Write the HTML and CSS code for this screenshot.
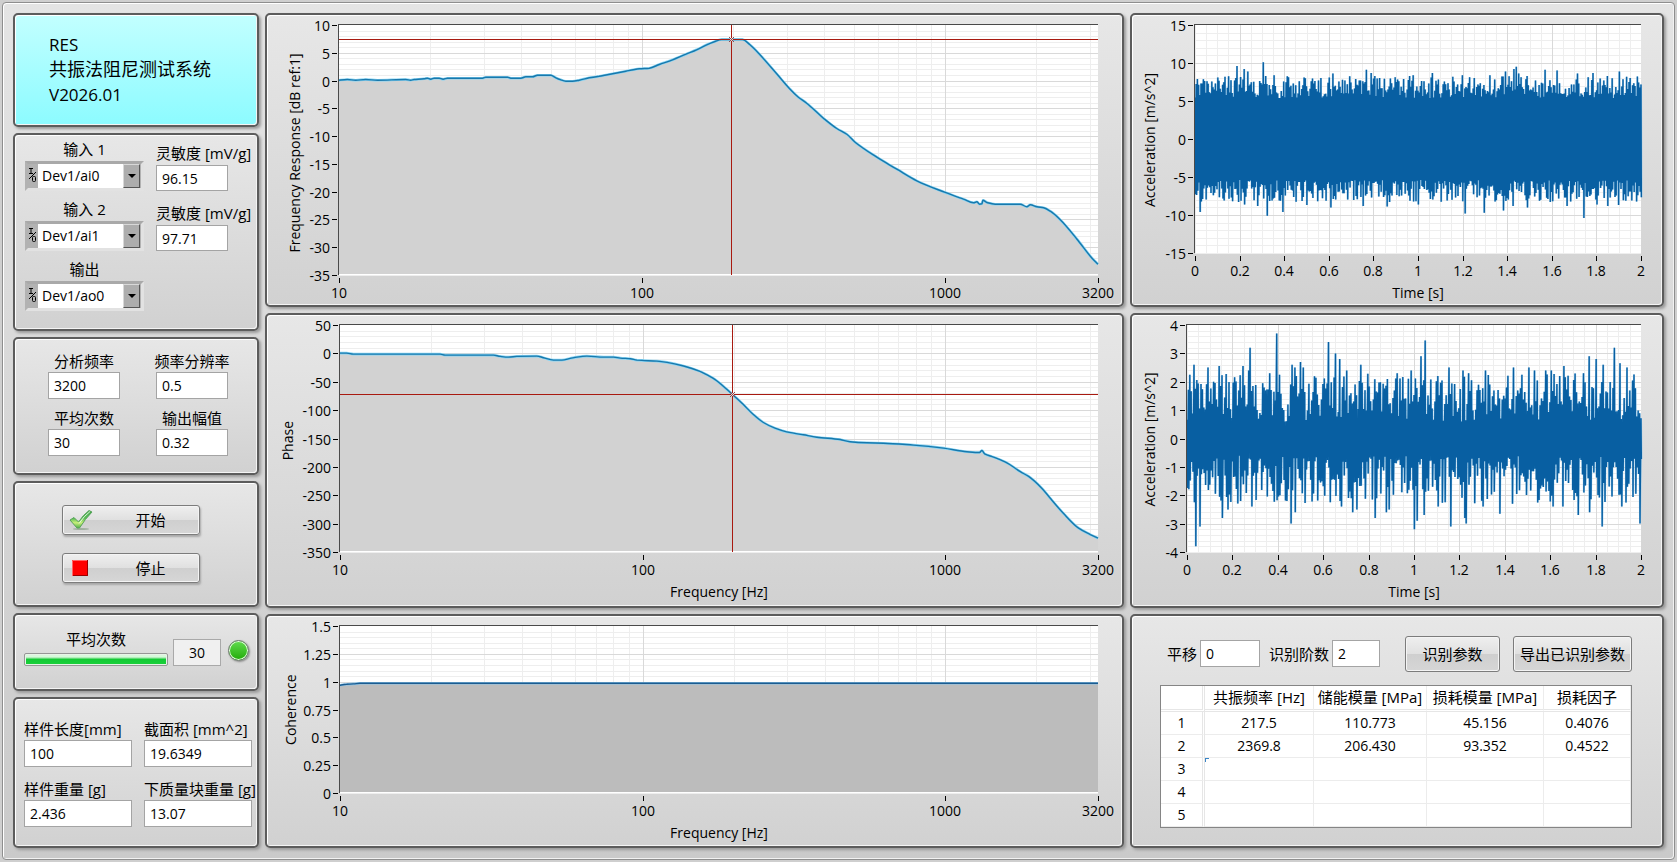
FILE: index.html
```html
<!DOCTYPE html>
<html lang="zh-CN">
<head>
<meta charset="utf-8">
<title>RES 共振法阻尼测试系统</title>
<link rel="stylesheet" href="styles.css">
</head>
<body>
<main class="frame">
  <div class="column side">
    <header class="panel banner">
      <h1 class="banner-title">RES<br><span class="banner-name">共振法阻尼测试系统</span><br>V2026.01</h1>
    </header>

    <section class="panel channels">
      <div class="field">
        <label for="in1">输入 1</label>
        <div class="ring">
          <svg class="io" viewBox="0 0 9 16"><path d="M1 1.5h4M3 1.5v5M1 6.500h4M1 12L8 5M4.500 10.500q0-1 1-1h1q1 0 1 1v3q0 1-1 1h-1q-1 0-1-1z"/></svg>
          <select id="in1"><option>Dev1/ai0</option></select>
          <span class="arrow"></span>
        </div>
      </div>
      <div class="field left drop"><label for="s1">灵敏度 [mV/g]</label><input id="s1" type="text" value="96.15"></div>
      <div class="field">
        <label for="in2">输入 2</label>
        <div class="ring">
          <svg class="io" viewBox="0 0 9 16"><path d="M1 1.5h4M3 1.5v5M1 6.500h4M1 12L8 5M4.500 10.500q0-1 1-1h1q1 0 1 1v3q0 1-1 1h-1q-1 0-1-1z"/></svg>
          <select id="in2"><option>Dev1/ai1</option></select>
          <span class="arrow"></span>
        </div>
      </div>
      <div class="field left drop"><label for="s2">灵敏度 [mV/g]</label><input id="s2" type="text" value="97.71"></div>
      <div class="field">
        <label for="out">输出</label>
        <div class="ring">
          <svg class="io" viewBox="0 0 9 16"><path d="M1 1.5h4M3 1.5v5M1 6.500h4M1 12L8 5M4.500 10.500q0-1 1-1h1q1 0 1 1v3q0 1-1 1h-1q-1 0-1-1z"/></svg>
          <select id="out"><option>Dev1/ao0</option></select>
          <span class="arrow"></span>
        </div>
      </div>
    </section>

    <section class="panel analysis">
      <div class="field"><label for="freq">分析频率</label><input id="freq" type="text" value="3200"></div>
      <div class="field"><label for="res">频率分辨率</label><input id="res" type="text" value="0.5"></div>
      <div class="field"><label for="avg">平均次数</label><input id="avg" type="text" value="30"></div>
      <div class="field"><label for="amp">输出幅值</label><input id="amp" type="text" value="0.32"></div>
    </section>

    <section class="panel actions">
      <button class="run" type="button">
        <svg class="run-icon" viewBox="0 0 24 22">
          <defs><linearGradient id="tick" x1="0" y1="0" x2="0" y2="1"><stop offset="0" stop-color="#3fa548"/><stop offset=".45" stop-color="#58bd55"/><stop offset=".7" stop-color="#c8ef7a"/><stop offset="1" stop-color="#4fb04a"/></linearGradient></defs>
          <ellipse cx="12" cy="20" rx="8" ry="1" fill="#8aa08a" opacity=".7"/>
          <path d="M1 11L5 8.500L9.500 13Q14 6 20 1.500L23 3Q16 10 10.500 19H8Z" fill="url(#tick)" stroke="#5aa35c"/>
          <path d="M10 14.500Q15 7 21 2.500" fill="none" stroke="#e3f8e0" stroke-width="1"/>
        </svg>
        <span class="run-text">开始</span>
      </button>
      <button class="run" type="button">
        <svg class="run-icon" viewBox="0 0 24 22"><rect x="3" y="3" width="16" height="16" fill="#f00"/><path d="M3.500 19V3.500H19" fill="none" stroke="#f66"/><path d="M4 18.500H18.500V3" fill="none" stroke="#900"/></svg>
        <span class="run-text">停止</span>
      </button>
    </section>

    <section class="panel progress">
      <div class="field meter"><label for="bar">平均次数</label><progress id="bar" max="30" value="30"></progress></div>
      <output class="count" for="bar">30</output>
      <span class="led"></span>
    </section>

    <section class="panel sample">
      <div class="field left"><label for="len">样件长度[mm]</label><input id="len" type="text" value="100"></div>
      <div class="field left"><label for="area">截面积 [mm^2]</label><input id="area" type="text" value="19.6349"></div>
      <div class="field left"><label for="mass">样件重量 [g]</label><input id="mass" type="text" value="2.436"></div>
      <div class="field left"><label for="block">下质量块重量 [g]</label><input id="block" type="text" value="13.07"></div>
    </section>
  </div>

  <div class="column charts">
    <section class="panel chart" data-chart="response"></section>
    <section class="panel chart" data-chart="phase"></section>
    <section class="panel chart" data-chart="coherence"></section>
  </div>

  <div class="column charts">
    <section class="panel chart" data-chart="wave1"></section>
    <section class="panel chart" data-chart="wave2"></section>
    <section class="panel results">
      <div class="toolbar">
        <label for="shift">平移</label><input class="shift" id="shift" type="text" value="0">
        <label class="order-label" for="order">识别阶数</label><input class="order" id="order" type="text" value="2">
        <button class="tool identify" type="button">识别参数</button>
        <button class="tool export" type="button">导出已识别参数</button>
      </div>
      <table class="modes">
        <colgroup><col class="c-index"><col class="c-freq"><col class="c-store"><col class="c-loss"><col class="c-factor"></colgroup>
        <thead><tr><th></th><th>共振频率 [Hz]</th><th>储能模量 [MPa]</th><th>损耗模量 [MPa]</th><th>损耗因子</th></tr></thead>
        <tbody>
          <tr><th>1</th><td>217.5</td><td>110.773</td><td>45.156</td><td>0.4076</td></tr>
          <tr><th>2</th><td>2369.8</td><td>206.430</td><td>93.352</td><td>0.4522</td></tr>
          <tr><th>3</th><td class="active"></td><td></td><td></td><td></td></tr>
          <tr><th>4</th><td></td><td></td><td></td><td></td></tr>
          <tr><th>5</th><td></td><td></td><td></td><td></td></tr>
        </tbody>
      </table>
    </section>
  </div>
</main>
<script src="charts.js"></script>
</body>
</html>
```

FILE: styles.css
```css
* { box-sizing: border-box; }

body {
  margin: 0;
  padding: 2px;
  height: 100vh;
  min-height: 840px;
  background: #cfcfcf;
  color: #000;
  font: 14px/20px "Open Sans", "Noto Sans CJK SC", sans-serif;
}

input, select, button { font: inherit; color: inherit; }

.frame {
  display: grid;
  grid-template-columns: 246px minmax(0, 859fr) minmax(500px, 534fr);
  gap: 6px;
  height: 100%;
  padding: 10px 10px 11px;
  border: 1px solid #8e8e8e;
  border-radius: 4px;
  box-shadow: inset 1px 1px #fff, inset -1px -1px #f2f2f2;
  background: linear-gradient(#e4e4e4, #cacaca);
}

.column { display: grid; gap: 6px; min-height: 0; }
.side { grid-template-rows: 114fr 198fr 138fr 126fr 78fr 151fr; }
.charts { grid-template-rows: 294fr 294fr 234fr; }

.panel {
  border: 2px solid #5c5c5c;
  border-radius: 5px;
  background: linear-gradient(#e7e7e7, #d1d1d1);
  box-shadow: inset 1px 1px #fff, inset -1px -1px #f4f4f4, 2px 2px 3px #9a9a9a;
  min-height: 0;
}

/* side column */

.banner { padding: 17px 0 0 34px; background: linear-gradient(#c2ffff, #8cfbff); }
.banner-title { margin: 0; font-size: 17px; font-weight: 400; line-height: 25px; }
.banner-name { font-size: 18px; }

.channels {
  display: grid;
  grid-template-columns: 119px 95px;
  grid-auto-rows: 52px;
  align-content: start;
  gap: 8px 12px;
  padding: 4px 0 0 10px;
}
.analysis {
  display: grid;
  grid-template-columns: 72px 72px;
  grid-auto-rows: 48px;
  align-content: start;
  gap: 9px 36px;
  padding: 12px 0 0 33px;
}
.sample {
  display: grid;
  grid-template-columns: 108px 108px;
  grid-auto-rows: 48px;
  align-content: start;
  gap: 12px;
  padding: 20px 0 0 9px;
}

.field { display: flex; flex-direction: column; align-items: center; gap: 1px; }
.channels .field { gap: 2px; }
.field.left { align-items: flex-start; }
.field.drop { padding-top: 4px; }
label { font-size: 15px; white-space: nowrap; }

input {
  width: 100%;
  height: 27px;
  padding: 0 5px;
  border: 1px solid #a4a4a4;
  border-radius: 0;
  background: #fff;
}
.drop input { width: 72px; }

.ring {
  position: relative;
  display: flex;
  align-items: stretch;
  width: 119px;
  height: 30px;
  padding-right: 1px;
  border: 3px solid;
  border-color: #a9a9a9 #e2e2e2 #e2e2e2 #b2b2b2;
  background: #b2b2b2;
}
.io { flex: none; width: 9px; height: 16px; margin: 3px 1px 0 0; fill: none; stroke: #000; }
.ring select {
  flex: 1;
  min-width: 0;
  padding: 0 20px 0 4px;
  border: 0;
  border-radius: 0;
  background: #fff;
  appearance: none;
}
.arrow {
  position: absolute;
  top: 0;
  right: 1px;
  bottom: 0;
  width: 17px;
  border: 1px solid;
  border-color: #d8d8d8 #555 #555 #d8d8d8;
  background: #adadad;
  pointer-events: none;
}
.arrow::after {
  content: "";
  position: absolute;
  top: 9px;
  left: 4px;
  border: 4px solid transparent;
  border-top-color: #000;
  border-bottom: 0;
}

.actions { display: flex; flex-direction: column; gap: 18px; padding: 22px 0 0 47px; }
.run, .tool {
  border: 1px solid #7c7c7c;
  border-radius: 3px;
  background: linear-gradient(#efefef, #e0e0e0 50%, #cfcfcf 51%, #d6d6d6);
  font-size: 15px;
}
.run {
  display: flex;
  align-items: center;
  width: 138px;
  height: 30px;
  padding: 0 2px 0 6px;
  box-shadow: inset 0 0 0 1px #f4f4f4, 1px 2px 2px #a8a8a8;
}
.run-icon { width: 24px; height: 22px; flex: none; }
.run-text { flex: 1; padding-left: 11px; text-align: center; }

.progress { display: flex; align-items: flex-start; padding: 14px 0 0 9px; }
.meter { width: 144px; gap: 4px; }
.meter progress {
  width: 100%;
  height: 13px;
  padding: 1px;
  border: 1px solid #969696;
  border-radius: 2px;
  background: #e8f4e8;
  appearance: none;
}
.meter progress::-webkit-progress-bar { background: #e8f4e8; }
.meter progress::-webkit-progress-value { background: linear-gradient(#d8f8dc 0 20%, #8fe69c 35%, #14c935 45%, #19d03a); }
.count {
  width: 48px;
  height: 27px;
  margin: 10px 7px 0 5px;
  border: 1px solid #a9a9a9;
  background: #f0f0f0;
  line-height: 25px;
  text-align: center;
}
.led {
  width: 21px;
  height: 21px;
  margin-top: 11px;
  border: 1px solid #6e7a6e;
  border-radius: 50%;
  background: linear-gradient(#62dc50, #22ab08);
  box-shadow: inset 0 0 0 1px #e6ffe0, 1px 1px 2px #888;
}

/* charts */

.chart { overflow: hidden; }
.chart svg { display: block; }
.chart text { font-size: 14px; fill: #000; }

/* results */

.results { padding: 20px 30px 0 28px; }
.toolbar { display: flex; align-items: center; padding-left: 7px; }
.toolbar .shift { width: 60px; margin-left: 3px; }
.toolbar .order-label { margin-left: 9px; }
.toolbar .order { width: 48px; margin-left: 3px; }
.tool { height: 36px; padding: 0; white-space: nowrap; box-shadow: inset 0 0 0 1px #f4f4f4; }
.identify { width: 95px; margin-left: auto; }
.export { width: 119px; margin-left: 13px; }

.modes {
  width: 100%;
  margin-top: 13px;
  border: 1px solid #858585;
  border-spacing: 0;
  table-layout: fixed;
  background: #fff;
  line-height: 22px;
  text-align: center;
}
.modes th, .modes td {
  position: relative;
  height: 23px;
  padding: 0;
  border: solid #ececec;
  border-width: 0 1px 1px 0;
  font-weight: 400;
  white-space: nowrap;
}
.modes thead th { height: 26px; border-bottom: 3px double #e6e6e6; font-size: 15px; }
.modes tr > :first-child { border-right: 3px double #e6e6e6; }
.c-index { width: 44px; }
.c-freq { width: 109px; }
.c-store { width: 113px; }
.c-loss { width: 117px; }
.active::before {
  content: "";
  position: absolute;
  top: 0;
  left: 0;
  width: 3px;
  height: 3px;
  border: solid #3b85c6;
  border-width: 1px 0 0 1px;
}
```

FILE: charts.js
```js
const GRID_MINOR = '#eeeeee';
const GRID_MAJOR = '#d9d9d9';

/* Spectrum traces are digitised on a size[0] x size[1] grid, origin at the top left of the plot. */
const response = [[0,164],[25,162],[50,164],[80,162],[115,164],[200,162],[215,164],[225,162],[255,160],[265,158],[275,161],[285,158],[300,158],[312,161],[325,158],[430,158],[440,155],[505,155],[515,158],[545,158],[560,154],[580,154],[595,149],[635,149],[650,157],[665,163],[680,167],[700,167],[720,164],[750,157],[780,152],[820,145],[860,137],[900,130],[930,128],[960,117],[1000,103],[1040,86],[1072,73],[1102,58],[1127,48],[1147,42],[1209,42],[1232,58],[1262,88],[1312,145],[1352,191],[1377,215],[1402,233],[1452,278],[1492,309],[1522,326],[1547,350],[1612,395],[1672,431],[1732,466],[1815,500],[1872,521],[1902,532],[1912,529],[1920,536],[1927,535],[1930,524],[1942,531],[1967,536],[2042,536],[2062,544],[2072,538],[2092,544],[2112,547],[2132,557],[2162,583],[2212,641],[2257,698],[2275,716]];
const phase = [[0,83],[20,83],[40,86],[300,86],[315,89],[460,89],[480,93],[505,95],[530,93],[590,92],[610,97],[640,104],[665,104],[690,99],[710,95],[740,92],[790,95],[820,95],[840,98],[870,100],[890,104],[905,105],[950,107],[980,111],[1030,122],[1079,138],[1099,148],[1129,166],[1149,183],[1176,207],[1209,238],[1239,268],[1269,292],[1304,309],[1339,320],[1389,329],[1429,336],[1499,343],[1529,350],[1579,353],[1629,354],[1719,360],[1809,369],[1879,380],[1917,382],[1924,376],[1932,386],[1959,396],[1999,413],[2039,440],[2064,454],[2104,490],[2129,520],[2169,566],[2214,610],[2249,629],[2272,640]];
const coherence = [[0,177],[20,174],[40,173],[60,171],[2272,171]];

const peaks1 = [[.022,-9.6],[.1,8.1],[.137,8.2],[.187,9.6],[.218,9.2],[.22,-8.6],[.236,8.9],[.28,-8.8],[.307,10.1],[.32,-10.1],[.355,8.4],[.39,-9.6],[.5,-8.7],[.607,-9],[.62,8.6],[.75,-8.8],[.77,9.1],[.79,8.7],[.86,-8.9],[.98,8.4],[1,-8.6],[1.065,8.7],[1.2,8.4],[1.207,-9.8],[1.297,-9.7],[1.32,8.4],[1.38,-9.4],[1.39,8.9],[1.43,9.2],[1.425,-8.8],[1.44,9.5],[1.45,8.6],[1.49,-9],[1.57,9.1],[1.625,9],[1.665,-8.8],[1.715,8.6],[1.74,-10.4],[1.785,8.7],[1.8,-8.6],[1.85,-8.8],[1.905,8.9],[1.9,-8.7]];
const peaks2 = [[.015,2.25],[.03,2.6],[.035,-3.8],[.053,-3.1],[.09,2.5],[.12,2],[.143,2.55],[.155,-2.8],[.18,-2.5],[.245,2.55],[.27,2.4],[.28,3.2],[.285,-2.4],[.395,3.7],[.41,2.25],[.457,-3],[.46,2.6],[.475,2.5],[.473,-2.6],[.5,2.7],[.515,2.5],[.625,3.4],[.655,3],[.675,2.8],[.68,-2.4],[.703,2.4],[.73,-2.6],[.745,-2.5],[.765,2.6],[.83,-2.8],[.88,2.1],[.875,-2.6],[.89,-2.5],[.985,2.4],[1,-3.2],[1.015,-2.9],[1.03,2.9],[1.045,-2.7],[1.05,3.45],[1.105,2.2],[1.107,-2.4],[1.155,2.5],[1.16,-3.1],[1.215,2.4],[1.22,-2.8],[1.23,-3],[1.24,2.3],[1.3,-2.4],[1.315,2.4],[1.375,-2.65],[1.435,-2.3],[1.44,2.5],[1.475,2.25],[1.505,2.5],[1.53,2.4],[1.58,2.4],[1.605,2.4],[1.61,-2.4],[1.655,-2.4],[1.66,2.55],[1.725,-2.7],[1.745,2.3],[1.77,2.9],[1.773,-2.6],[1.8,2.8],[1.825,-3.1],[1.835,2.6],[1.88,3.2],[1.91,2.65],[1.912,-2.4],[1.94,2.5],[1.995,-3]];

const logAxis = { log: true, min: 10, max: 3200, ticks: [10, 100, 1000, 3200] };
const timeAxis = { min: 0, max: 2, ticks: [0, .2, .4, .6, .8, 1, 1.2, 1.4, 1.6, 1.8, 2], minor: 4 };

const charts = {
  response: { x: logAxis, y: { min: -35, max: 10, step: 5, title: 'Frequency Response [dB ref:1]', at: 28, mid: 128 },
    margin: [10, 24, 30, 72], trace: response, size: [2275, 750], fill: '#d2d2d2', line: '#1878ac', glow: '#86d4f4', cursor: [1176, 41] },
  phase: { x: logAxis, xTitle: 'Frequency [Hz]', y: { min: -350, max: 50, step: 50, title: 'Phase', at: 21, mid: 116 },
    margin: [10, 24, 53, 73], trace: phase, size: [2272, 683], fill: '#d2d2d2', line: '#1878ac', glow: '#86d4f4', cursor: [1176, 207] },
  coherence: { x: logAxis, xTitle: 'Frequency [Hz]', y: { min: 0, max: 1.5, step: .25, title: 'Coherence', at: 24, mid: 84 },
    margin: [10, 24, 53, 73], trace: coherence, size: [2272, 503], fill: '#bcbcbc', line: '#1c5c90', glow: '#8cc4e8' },
  wave1: { x: timeAxis, xTitle: 'Time [s]', y: { min: -15, max: 15, step: 5, title: 'Acceleration [m/s^2]', at: 18, mid: 115 },
    margin: [10, 21, 52, 63], wave: { base: 5.4, spread: 2.9, power: 1.1, pitch: 1.2, peaks: peaks1 } },
  wave2: { x: timeAxis, xTitle: 'Time [s]', y: { min: -4, max: 4, step: 1, title: 'Acceleration [m/s^2]', at: 18, mid: 115 },
    margin: [10, 21, 53, 55], wave: { base: .6, spread: 1.7, power: 1, pitch: 1.4, peaks: peaks2 } }
};

function noise(seed) {
  let s = seed;
  return () => (s = (s * 16807) % 2147483647) / 2147483647;
}

function waveform(wave, width) {
  const rnd = noise(4711);
  const count = Math.round(width / wave.pitch);
  const hi = [], lo = [];
  const level = () => wave.base + wave.spread * Math.pow(rnd(), wave.power);
  for (let i = 0; i <= count; i++) { hi.push(level()); lo.push(-level()); }
  for (const [t, v] of wave.peaks) (v > 0 ? hi : lo)[Math.round(t / 2 * count)] = v;
  return hi.map((h, i) => [i / count * 2, h, lo[i]]);
}

/* Monotone cubic through the points, so flat stretches stay flat. */
function smooth(p) {
  const n = p.length, d = [], m = [];
  for (let i = 0; i < n - 1; i++) d.push((p[i + 1][1] - p[i][1]) / (p[i + 1][0] - p[i][0]));
  m.push(d[0]);
  for (let i = 1; i < n - 1; i++) m.push(d[i - 1] * d[i] <= 0 ? 0 : 2 * d[i - 1] * d[i] / (d[i - 1] + d[i]));
  m.push(d[n - 2]);
  let path = `${p[0][0].toFixed(1)} ${p[0][1].toFixed(1)}`;
  for (let i = 0; i < n - 1; i++) {
    const s = (p[i + 1][0] - p[i][0]) / 3;
    path += 'C' + [p[i][0] + s, p[i][1] + s * m[i], p[i + 1][0] - s, p[i + 1][1] - s * m[i + 1], p[i + 1][0], p[i + 1][1]].map(v => v.toFixed(1)).join(' ');
  }
  return path;
}

function draw(panel) {
  const c = charts[panel.dataset.chart];
  const W = panel.clientWidth, H = panel.clientHeight;
  const [mt, mr, mb, ml] = c.margin;
  const w = W - ml - mr, h = H - mt - mb;
  const crisp = v => Math.round(v) + .5;
  const X = v => ml + w * (c.x.log ? Math.log(v / c.x.min) / Math.log(c.x.max / c.x.min) : (v - c.x.min) / (c.x.max - c.x.min));
  const Y = v => mt + h * (c.y.max - v) / (c.y.max - c.y.min);
  const out = [];
  const line = (x1, y1, x2, y2, color) => out.push(`<path d="M${x1} ${y1}L${x2} ${y2}" stroke="${color}"/>`);
  const text = (x, y, anchor, s) => out.push(`<text x="${x}" y="${y}" text-anchor="${anchor}">${s}</text>`);
  const vline = (v, color) => line(crisp(X(v)), mt, crisp(X(v)), mt + h, color);
  const hline = (v, color) => line(ml, crisp(Y(v)), ml + w, crisp(Y(v)), color);
  const round = v => Math.round(v * 1000) / 1000;

  out.push(`<rect x="${ml}" y="${mt}" width="${w}" height="${h}" fill="#fff"/>`);

  for (let v = c.y.min; v < c.y.max - 1e-6; v += c.y.step / 5) hline(v, GRID_MINOR);
  if (c.x.log) {
    for (let d = 10; d < c.x.max; d *= 10)
      for (let k = 2; k < 10 && d * k < c.x.max; k++) vline(d * k, GRID_MINOR);
  } else {
    for (let v = 0; v < 2; v += .2 / c.x.minor) vline(v, GRID_MINOR);
  }
  for (let v = c.y.min + c.y.step; v < c.y.max - 1e-6; v += c.y.step) hline(v, GRID_MAJOR);
  c.x.ticks.slice(1, -1).forEach(v => vline(v, GRID_MAJOR));

  if (c.trace) {
    const pts = smooth(c.trace.map(([x, y]) => [ml + x / c.size[0] * w, mt + y / c.size[1] * h + .5]));
    out.push(`<path d="M${pts}V${mt + h - 1}H${ml}Z" fill="${c.fill}"/>`);
    line(ml, mt + h - .5, ml + w, mt + h - .5, '#fff');
    out.push(`<path d="M${pts}" fill="none" stroke="${c.glow}" stroke-width="2.6"/><path d="M${pts}" fill="none" stroke="${c.line}" stroke-width="1.4"/>`);
  } else {
    const cols = waveform(c.wave, w);
    const path = cols.map(([t, a, b]) => `${X(t).toFixed(1)} ${Y(a).toFixed(1)}L${(X(t) + .4).toFixed(1)} ${Y(b).toFixed(1)}`).join('L');
    out.push(`<path d="M${path}" fill="none" stroke="#8cc2e6" stroke-width="2" stroke-linejoin="bevel"/><path d="M${path}" fill="none" stroke="#085fa2" stroke-width="1.3" stroke-linejoin="bevel"/>`);
  }

  if (c.cursor) {
    const cx = crisp(ml + c.cursor[0] / c.size[0] * w - .5), cy = crisp(mt + c.cursor[1] / c.size[1] * h);
    line(cx, mt, cx, mt + h, '#a81a10');
    line(ml, cy, ml + w, cy, '#a81a10');
    out.push(`<rect x="${cx - 1.5}" y="${cy - 1.5}" width="3" height="3" fill="#e8d4d4"/><path d="M${cx - 2.5} ${cy - 2.5}l5 5m0-5l-5 5" stroke="#8a4a50"/>`);
  }

  line(ml - .5, mt, ml - .5, mt + h, '#4a4a4a');
  line(ml - 1, mt - .5, ml + w, mt - .5, '#4a4a4a');

  for (let v = c.y.min; v < c.y.max + 1e-6; v += c.y.step) {
    line(ml - 7, crisp(Y(v)), ml - 2, crisp(Y(v)), '#000');
    text(ml - 9, Math.round(Y(v)) + 6, 'end', round(v));
  }
  for (const v of c.x.ticks) {
    line(crisp(X(v)), mt + h + 3, crisp(X(v)), mt + h + 8, '#000');
    text(Math.round(X(v)), mt + h + 23, 'middle', v);
  }
  if (c.xTitle) text(ml + w / 2, mt + h + 45, 'middle', c.xTitle);
  out.push(`<text transform="translate(${c.y.at + 5} ${mt + c.y.mid / (c.size ? c.size[1] / 3 : 228) * h}) rotate(-90)" text-anchor="middle">${c.y.title}</text>`);

  panel.innerHTML = `<svg width="${W}" height="${H}" viewBox="0 0 ${W} ${H}">${out.join('')}</svg>`;
}

const panels = [...document.querySelectorAll('.chart')];
const drawAll = () => panels.forEach(draw);
drawAll();
window.addEventListener('resize', drawAll);
```
